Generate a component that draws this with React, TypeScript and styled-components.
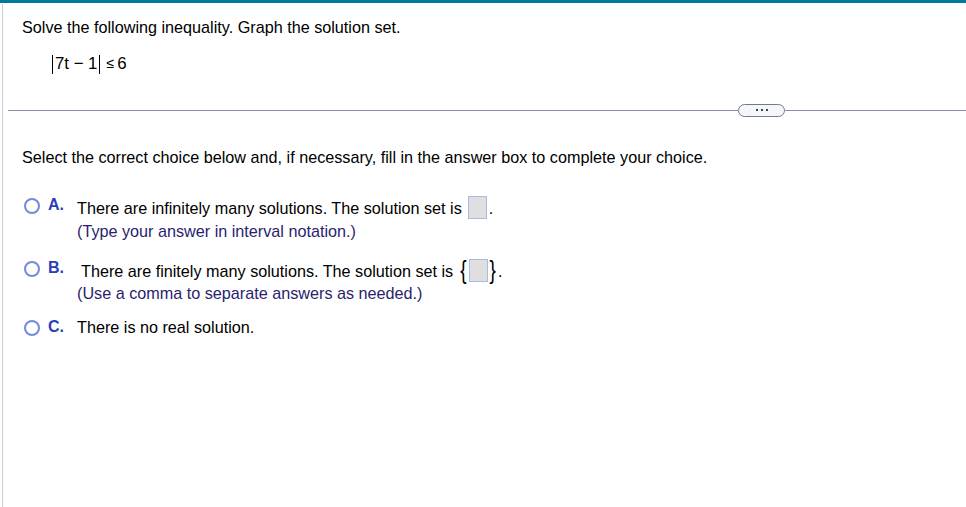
import styled, { createGlobalStyle } from "styled-components";

const GlobalStyle = createGlobalStyle`
  html, body {
    margin: 0;
    padding: 0;
    background: #fff;
  }
  body {
    font-family: "Liberation Sans", Arial, sans-serif;
    font-size: 16.2px;
    color: #000;
  }
`;

const Page = styled.div`
  width: 966px;
  height: 507px;
  overflow: hidden;
  display: flex;
  flex-direction: column;
`;

const TopBar = styled.div`
  height: 3px;
  background: #00799c;
  flex: none;
`;

const Body = styled.div`
  flex: 1;
  margin-left: 2px;
  margin-top: 1px;
  border-left: 1px solid #c8cfdc;
  padding-left: 19px;
`;

const Question = styled.p`
  margin: 14px 0 0;
  line-height: 18px;
`;

const Expression = styled.div`
  margin: 18px 0 0 28px;
  display: flex;
  align-items: center;
  height: 20px;
  font-size: 16.8px;
`;

const Bar = styled.span`
  display: inline-block;
  width: 1px;
  height: 19px;
  background: #000;
  margin: 0 2px;
`;

const LessEq = styled.span`
  margin: 0 3px 2px 4px;
  font-size: 14px;
`;

const Divider = styled.div`
  display: flex;
  align-items: center;
  margin: 29px 0 0 -14px;
  height: 14px;
`;

const Rule = styled.div<{ $width?: number }>`
  height: 1px;
  background: #8690a5;
  flex: ${(p) => (p.$width ? "none" : 1)};
  width: ${(p) => (p.$width ? `${p.$width}px` : "auto")};
`;

const MoreButton = styled.div`
  width: 45px;
  height: 11px;
  border: 1px solid #6f7a8e;
  border-radius: 7px;
  background: #f4f6f9;
  display: flex;
  align-items: center;
  justify-content: center;
  gap: 3px;
  flex: none;
`;

const Dot = styled.span`
  width: 2px;
  height: 2px;
  background: #3b4454;
`;

const Instruction = styled.p`
  margin: 31px 0 0;
  line-height: 18px;
`;

const Choices = styled.div`
  margin-top: 30px;
  display: flex;
  flex-direction: column;
`;

const Choice = styled.div<{ $gap: number }>`
  display: flex;
  align-items: flex-start;
  margin-bottom: ${(p) => p.$gap}px;
`;

const Radio = styled.span`
  width: 16px;
  height: 16px;
  box-sizing: border-box;
  border: 2px solid #7389de;
  border-radius: 50%;
  margin: 2px 8px 0 2px;
  flex: none;
`;

const Letter = styled.span<{ $shift?: number }>`
  font-weight: bold;
  color: #2a3fb8;
  font-size: 16px;
  width: 29px;
  flex: none;
  line-height: 18px;
  position: relative;
  top: ${(p) => p.$shift ?? 0}px;
`;

const ChoiceText = styled.div<{ $indent?: number }>`
  line-height: 18px;
  padding-left: ${(p) => p.$indent ?? 0}px;
`;

const Main = styled.div`
  display: flex;
  align-items: center;
  white-space: nowrap;
`;

const Hint = styled.div<{ $pull?: number; $top?: number }>`
  color: #2a1e6e;
  margin-top: ${(p) => p.$top ?? 5}px;
  margin-left: ${(p) => -(p.$pull ?? 0)}px;
`;

const AnswerBox = styled.span`
  display: inline-block;
  width: 17px;
  height: 21px;
  background: #dfdfdf;
  border: 1px solid #a6bce8;
  margin: 0 2px 0 6px;
`;

const Brace = styled.span`
  font-size: 19px;
  line-height: 18px;
  display: inline-block;
  transform: scaleY(1.35);
`;

const BraceGroup = styled.span`
  display: inline-flex;
  align-items: center;
  margin: 0 2px 0 7px;
  ${AnswerBox} {
    margin: 0 2px;
  }
`;

export default function App() {
  return (
    <Page>
      <GlobalStyle />
      <TopBar />
      <Body>
        <Question>Solve the following inequality. Graph the solution set.</Question>
        <Expression>
          <Bar />
          7t − 1
          <Bar />
          <LessEq>≤</LessEq>6
        </Expression>
        <Divider>
          <Rule />
          <MoreButton>
            <Dot />
            <Dot />
            <Dot />
          </MoreButton>
          <Rule $width={181} />
        </Divider>
        <Instruction>
          Select the correct choice below and, if necessary, fill in the answer box to complete your choice.
        </Instruction>
        <Choices>
          <Choice $gap={19}>
            <Radio />
            <Letter>A.</Letter>
            <ChoiceText>
              <Main>
                There are infinitely many solutions. The solution set is
                <AnswerBox />.
              </Main>
              <Hint $top={3}>(Type your answer in interval notation.)</Hint>
            </ChoiceText>
          </Choice>
          <Choice $gap={16}>
            <Radio />
            <Letter>B.</Letter>
            <ChoiceText $indent={4}>
              <Main>
                There are finitely many solutions. The solution set is
                <BraceGroup>
                  <Brace>{"{"}</Brace>
                  <AnswerBox />
                  <Brace>{"}"}</Brace>
                </BraceGroup>
                .
              </Main>
              <Hint $pull={4} $top={2}>
                (Use a comma to separate answers as needed.)
              </Hint>
            </ChoiceText>
          </Choice>
          <Choice $gap={0}>
            <Radio />
            <Letter>C.</Letter>
            <ChoiceText>
              <Main>There is no real solution.</Main>
            </ChoiceText>
          </Choice>
        </Choices>
      </Body>
    </Page>
  );
}
